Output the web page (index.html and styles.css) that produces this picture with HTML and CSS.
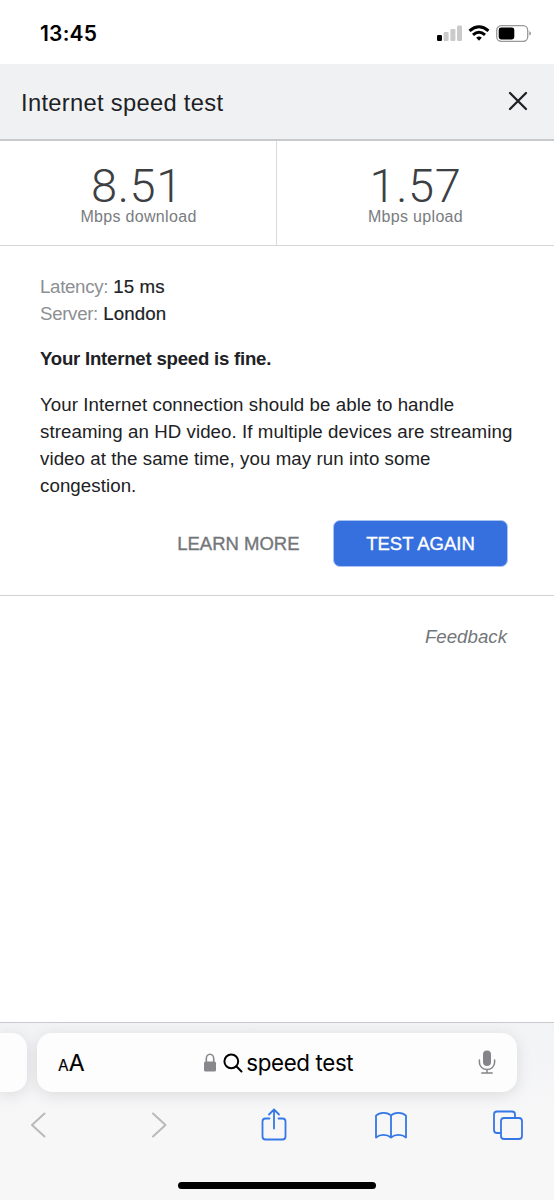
FILE: index.html
```html
<!DOCTYPE html>
<html lang="en">
<head>
<meta charset="utf-8">
<title>Internet speed test</title>
<link rel="stylesheet" href="styles.css">
</head>
<body>
<div class="screen">
  <div class="status">
    <span class="clock">13:45</span>
    <svg class="status-icons" width="96" height="20" viewBox="0 0 96 20">
      <rect x="2" y="11" width="5" height="6" rx="1.2" fill="#000"/>
      <g fill="#cacaca">
        <rect x="8.600" y="8" width="5" height="9" rx="1.200"/>
        <rect x="15.400" y="5" width="5" height="12" rx="1.200"/>
        <rect x="22" y="1.500" width="5" height="15.500" rx="1.200"/>
      </g>
      <g fill="none" stroke="#000" stroke-width="3">
        <path d="M34.500 6.800Q44 -1.300 53.500 6.800"/>
        <path d="M38 10.800Q44 5.700 50 10.800"/>
      </g>
      <path d="M41.200 13.700Q44 11.300 46.800 13.700L44 16.700Z"/>
      <rect x="61.700" y="1.700" width="31" height="15.600" rx="4.500" fill="none" stroke="#999" stroke-width="1.300"/>
      <rect x="63.700" y="3.600" width="15.600" height="11.800" rx="2.400"/>
      <path d="M94.400 7q3 2.300 0 4.800Z" fill="#888"/>
    </svg>
  </div>
  <header class="title-bar">
    <h1 class="title">Internet speed test</h1>
    <svg class="close" width="22" height="22" viewBox="0 0 22 22"><path d="M3 3L19 19M19 3L3 19"/></svg>
  </header>
  <section class="results">
    <div class="result"><div class="value">8.51</div><div class="unit">Mbps download</div></div>
    <div class="result"><div class="value upload">1.57</div><div class="unit">Mbps upload</div></div>
  </section>
  <section class="details">
    <div class="meta"><span class="label">Latency:</span> <span class="data">15 ms</span></div>
    <div class="meta"><span class="label">Server:</span> <span class="data">London</span></div>
    <h2 class="verdict">Your Internet speed is fine.</h2>
    <p class="advice">Your Internet connection should be able to handle<br>streaming an HD video. If multiple devices are streaming<br>video at the same time, you may run into some<br>congestion.</p>
    <div class="actions">
      <a class="learn">LEARN MORE</a>
      <button class="again">TEST AGAIN</button>
    </div>
  </section>
  <div class="feedback">Feedback</div>
  <footer class="browser">
    <div class="tabs">
      <div class="tab-edge"></div>
      <div class="address">
        <span class="aa"><span class="aa-small">A</span>A</span>
        <div class="query">
          <svg width="14" height="20" viewBox="0 0 14 20"><path d="M3.300 9V5.500a3.700 4.300 0 0 1 7.400 0V9" fill="none" stroke="#88888c" stroke-width="1.600"/><rect x="1" y="8.400" width="12" height="10.200" rx="1.600" fill="#88888c"/></svg>
          <svg class="search" width="20" height="20" viewBox="0 0 20 20"><circle cx="8.300" cy="8.300" r="6.900"/><path d="M13.300 13.300L18.500 18.500"/></svg>
          <span class="query-text">speed test</span>
        </div>
        <svg class="mic" width="20" height="28" viewBox="0 0 20 28"><rect x="6" y="1.500" width="8" height="15.500" rx="4" fill="#858589"/><path d="M2.400 11v2.500a7.600 7 0 0 0 15.200 0V11M10 20.500V24M4.800 24H15.200" fill="none" stroke="#858589" stroke-width="1.500" stroke-linecap="round"/></svg>
      </div>
    </div>
    <nav class="toolbar">
      <svg class="arrow" width="20" height="36" viewBox="0 0 20 36"><path d="M15.500 6.500L3 18L15.500 29.500"/></svg>
      <svg class="arrow" width="20" height="36" viewBox="0 0 20 36"><path d="M4 6.500L16.500 18L4 29.500"/></svg>
      <svg class="tool" width="30" height="36" viewBox="0 0 30 36"><path d="M10.500 11.500H6.500Q3.500 11.500 3.500 14.500V29.500Q3.500 32.500 6.500 32.500H23.500Q26.500 32.500 26.500 29.500V14.500Q26.500 11.500 23.500 11.500H19.500M15 21.500V2.500M10 7.500L15 2.500L20 7.500"/></svg>
      <svg class="tool" width="34" height="36" viewBox="0 0 34 36"><path d="M17 8.500C14 5.200 6 4.600 2 8.600V30.500C6 27 13 27 17 30.500C21 27 28 27 32 30.500V8.600C28 4.600 20 5.200 17 8.500V30.500"/></svg>
      <svg class="tool" width="34" height="36" viewBox="0 0 34 36"><path d="M10 26H7Q4 26 4 23V7.500Q4 4.500 7 4.500H22Q25 4.500 25 7.500V10.500"/><rect x="11" y="11" width="21" height="21" rx="3"/></svg>
    </nav>
    <div class="home"></div>
  </footer>
</div>
</body>
</html>
```
FILE: styles.css
```css
* { box-sizing: border-box; }
body { margin: 0; background: #fff; color: #202124; font-family: "Liberation Sans", Arial, sans-serif; }
.screen { width: 554px; height: 1200px; display: flex; flex-direction: column; overflow: hidden; }
.status { height: 64px; padding: 21px 23px 0 40px; display: flex; justify-content: space-between; align-items: flex-start; }
.clock { font: 600 21px/25px Inter, sans-serif; color: #000; letter-spacing: .2px; }
.status-icons { margin-top: 3px; }
.title-bar { height: 77px; padding: 0 25px 0 21px; display: flex; justify-content: space-between; align-items: center; background: #f0f1f3; border-bottom: 2px solid #c9cacd; }
.title { margin: 2px 0 0; font-size: 23.7px; font-weight: 400; letter-spacing: .32px; line-height: 28px; }
.close { margin-top: -2px; fill: none; stroke: #202124; stroke-width: 2.3; stroke-linecap: round; }
.results { height: 105px; display: grid; grid-template-columns: 1fr 1fr; border-bottom: 1px solid #d5d6da; }
.result { padding-top: 26px; text-align: center; }
.result + .result { border-left: 1px solid #dadbdf; margin-left: -1px; }
.value { font: 300 47px/37px Roboto, sans-serif; color: #3c4043; letter-spacing: .6px; margin-right: 3px; }
.upload { margin-right: 0; }
.unit { margin-top: 4px; font-size: 16px; line-height: 18px; letter-spacing: .32px; color: #797c80; }
.details { height: 350px; padding: 27px 46px 0 40px; border-bottom: 1px solid #d2d3d5; }
.meta { font-size: 18.7px; line-height: 27px; }
.label { color: #8c8f93; letter-spacing: -.32px; }
.data { -webkit-text-stroke: .2px; letter-spacing: .1px; }
.verdict { margin: 18px 0 0; font-size: 18.6px; line-height: 27px; letter-spacing: -.22px; }
.advice { margin: 20px 0 0; font-size: 18.7px; line-height: 26.9px; letter-spacing: .07px; white-space: nowrap; }
.actions { margin-top: 20.4px; display: flex; justify-content: flex-end; align-items: center; gap: 33.5px; }
.learn { font-size: 18.5px; color: #737679; -webkit-text-stroke: .35px; }
.again { width: 175px; height: 47px; padding: 0; border: 1px solid #a9c4f3; border-radius: 7px; background: #3670df; color: #fff; font: 18.5px "Liberation Sans", Arial, sans-serif; -webkit-text-stroke: .35px; }
.feedback { height: 426px; padding: 29px 47px 0 0; text-align: right; font-size: 18.7px; line-height: 24px; font-style: italic; color: #737679; }
.browser { height: 178px; border-top: 1px solid #c9cacd; background: linear-gradient(#f2f3f5, #f7f7f8 55%); display: flex; flex-direction: column; }
.tabs { height: 79px; padding-top: 10px; display: flex; gap: 10px; }
.tab-edge { width: 27px; height: 59px; border-radius: 0 15px 15px 0; background: #fdfdfe; box-shadow: 0 3px 16px #0000001c; }
.address { width: 480px; height: 59px; padding: 0 20px 0 21px; display: flex; align-items: center; justify-content: space-between; border-radius: 15px; background: #fdfdfe; box-shadow: 0 3px 16px #0000001c; color: #000; }
.aa { margin-top: 3px; font: 400 23px/30px Inter, sans-serif; -webkit-text-stroke: .2px; }
.aa-small { font-size: 15.5px; }
.query { display: flex; align-items: center; margin-right: 5px; }
.search { margin-left: 6px; fill: none; stroke: #000; stroke-width: 2; stroke-linecap: round; }
.query-text { margin-left: 3px; font: 400 22.3px/30px Inter, sans-serif; letter-spacing: -.35px; }
.toolbar { height: 48px; padding: 4px 0 0 29px; display: grid; grid-template-columns: 120px 110px 115px 116px 34px; align-items: start; }
.arrow { margin-top: 1px; fill: none; stroke: #b9b9bb; stroke-width: 2; stroke-linecap: round; stroke-linejoin: round; }
.tool { margin-top: 1px; fill: none; stroke: #3577e5; stroke-width: 1.8; stroke-linecap: round; stroke-linejoin: round; }
.home { width: 198px; height: 7px; margin: 32px 0 0 178px; border-radius: 4px; background: #000; }
```
